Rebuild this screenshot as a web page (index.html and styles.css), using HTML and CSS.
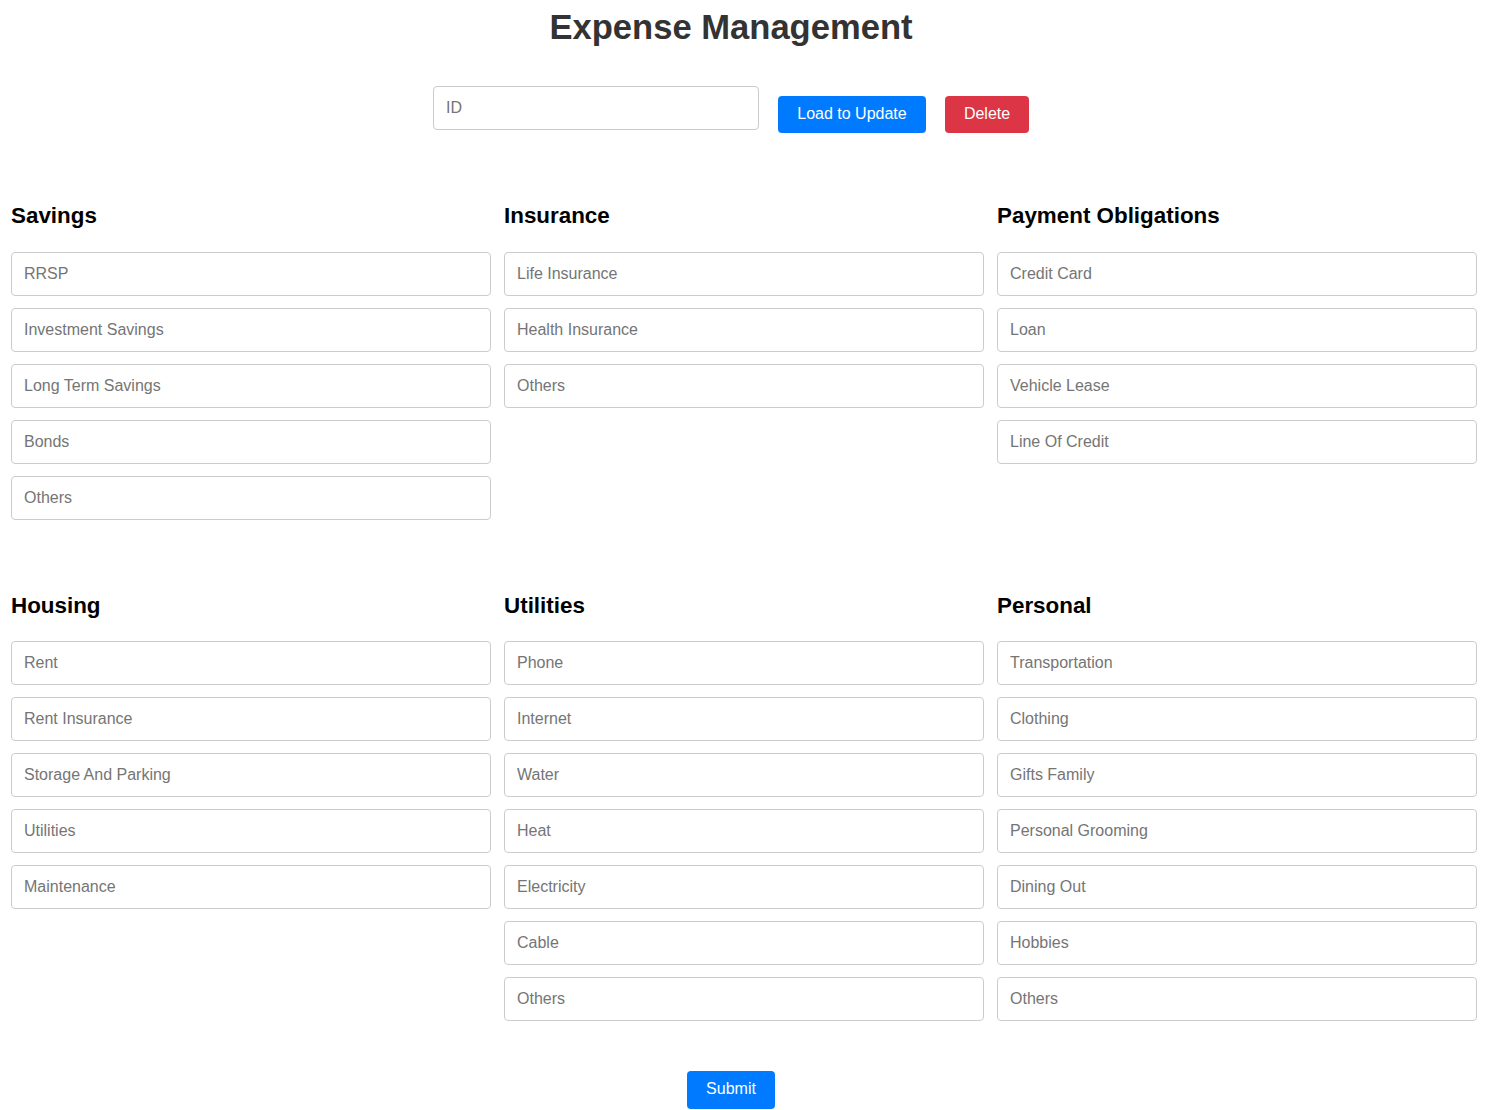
FILE: index.html
```html
<!DOCTYPE html>
<html lang="en">
<head>
<meta charset="utf-8">
<title>Expense Management</title>
<link rel="stylesheet" href="styles.css">
</head>
<body>
<div class="page">
  <h1 class="title">Expense Management</h1>
  <div class="id-row">
    <input class="field id-field" type="text" placeholder="ID">
    <button class="btn btn-primary btn-load" type="button">Load to Update</button>
    <button class="btn btn-danger btn-delete" type="button">Delete</button>
  </div>

  <div class="grid grid-top">
    <section class="group">
      <h2 class="group-title">Savings</h2>
      <div class="fields">
        <input class="field" type="text" placeholder="RRSP">
        <input class="field" type="text" placeholder="Investment Savings">
        <input class="field" type="text" placeholder="Long Term Savings">
        <input class="field" type="text" placeholder="Bonds">
        <input class="field" type="text" placeholder="Others">
      </div>
    </section>
    <section class="group">
      <h2 class="group-title">Insurance</h2>
      <div class="fields">
        <input class="field" type="text" placeholder="Life Insurance">
        <input class="field" type="text" placeholder="Health Insurance">
        <input class="field" type="text" placeholder="Others">
      </div>
    </section>
    <section class="group">
      <h2 class="group-title">Payment Obligations</h2>
      <div class="fields">
        <input class="field" type="text" placeholder="Credit Card">
        <input class="field" type="text" placeholder="Loan">
        <input class="field" type="text" placeholder="Vehicle Lease">
        <input class="field" type="text" placeholder="Line Of Credit">
      </div>
    </section>
  </div>

  <div class="grid grid-bottom">
    <section class="group">
      <h2 class="group-title">Housing</h2>
      <div class="fields">
        <input class="field" type="text" placeholder="Rent">
        <input class="field" type="text" placeholder="Rent Insurance">
        <input class="field" type="text" placeholder="Storage And Parking">
        <input class="field" type="text" placeholder="Utilities">
        <input class="field" type="text" placeholder="Maintenance">
      </div>
    </section>
    <section class="group">
      <h2 class="group-title">Utilities</h2>
      <div class="fields">
        <input class="field" type="text" placeholder="Phone">
        <input class="field" type="text" placeholder="Internet">
        <input class="field" type="text" placeholder="Water">
        <input class="field" type="text" placeholder="Heat">
        <input class="field" type="text" placeholder="Electricity">
        <input class="field" type="text" placeholder="Cable">
        <input class="field" type="text" placeholder="Others">
      </div>
    </section>
    <section class="group">
      <h2 class="group-title">Personal</h2>
      <div class="fields">
        <input class="field" type="text" placeholder="Transportation">
        <input class="field" type="text" placeholder="Clothing">
        <input class="field" type="text" placeholder="Gifts Family">
        <input class="field" type="text" placeholder="Personal Grooming">
        <input class="field" type="text" placeholder="Dining Out">
        <input class="field" type="text" placeholder="Hobbies">
        <input class="field" type="text" placeholder="Others">
      </div>
    </section>
  </div>

  <div class="submit-row">
    <button class="btn btn-primary btn-submit" type="submit">Submit</button>
  </div>
</div>
</body>
</html>
```

FILE: styles.css
```css
* {
  box-sizing: border-box;
}

html, body {
  margin: 0;
  padding: 0;
  background: #ffffff;
}

body {
  font-family: "Liberation Sans", Arial, sans-serif;
  color: #000;
}

.page {
  width: 1462px;
  padding-top: 7px;
}

.title {
  margin: 0;
  font-size: 34.6px;
  line-height: 40px;
  font-weight: bold;
  color: #333333;
  text-align: center;
}

.id-row {
  display: flex;
  justify-content: center;
  align-items: flex-start;
  gap: 19px;
  margin-top: 39px;
}

.field {
  display: block;
  width: 100%;
  height: 44px;
  padding: 0 12px;
  border: 1px solid #cccccc;
  border-radius: 4px;
  background: #fff;
  font-family: "Liberation Sans", Arial, sans-serif;
  font-size: 16px;
  color: #495057;
  outline: none;
}

.field::placeholder {
  color: #757575;
  opacity: 1;
}

.id-field {
  width: 326px;
}

.btn {
  height: 37px;
  margin-top: 10px;
  padding: 0 0 2px 0;
  border: none;
  border-radius: 4px;
  color: #ffffff;
  font-family: "Liberation Sans", Arial, sans-serif;
  font-size: 16px;
  cursor: pointer;
}

.btn-primary {
  background: #007bff;
}

.btn-danger {
  background: #dc3545;
}

.btn-load {
  width: 148px;
}

.btn-delete {
  width: 84px;
}

.grid {
  display: grid;
  grid-template-columns: repeat(3, 480px);
  column-gap: 13px;
  align-items: start;
  padding-left: 11px;
}

.grid-top {
  margin-top: 70px;
}

.grid-bottom {
  margin-top: 73px;
}

.group-title {
  margin: 0 0 23px 0;
  font-size: 22.4px;
  line-height: 26px;
  font-weight: bold;
  color: #000;
}

.grid-bottom .group-title {
  margin-bottom: 22px;
}

.fields {
  display: flex;
  flex-direction: column;
  gap: 12px;
}

.submit-row {
  display: flex;
  justify-content: center;
  margin-top: 50px;
}

.btn-submit {
  width: 88px;
  height: 38px;
  margin-top: 0;
}
```
